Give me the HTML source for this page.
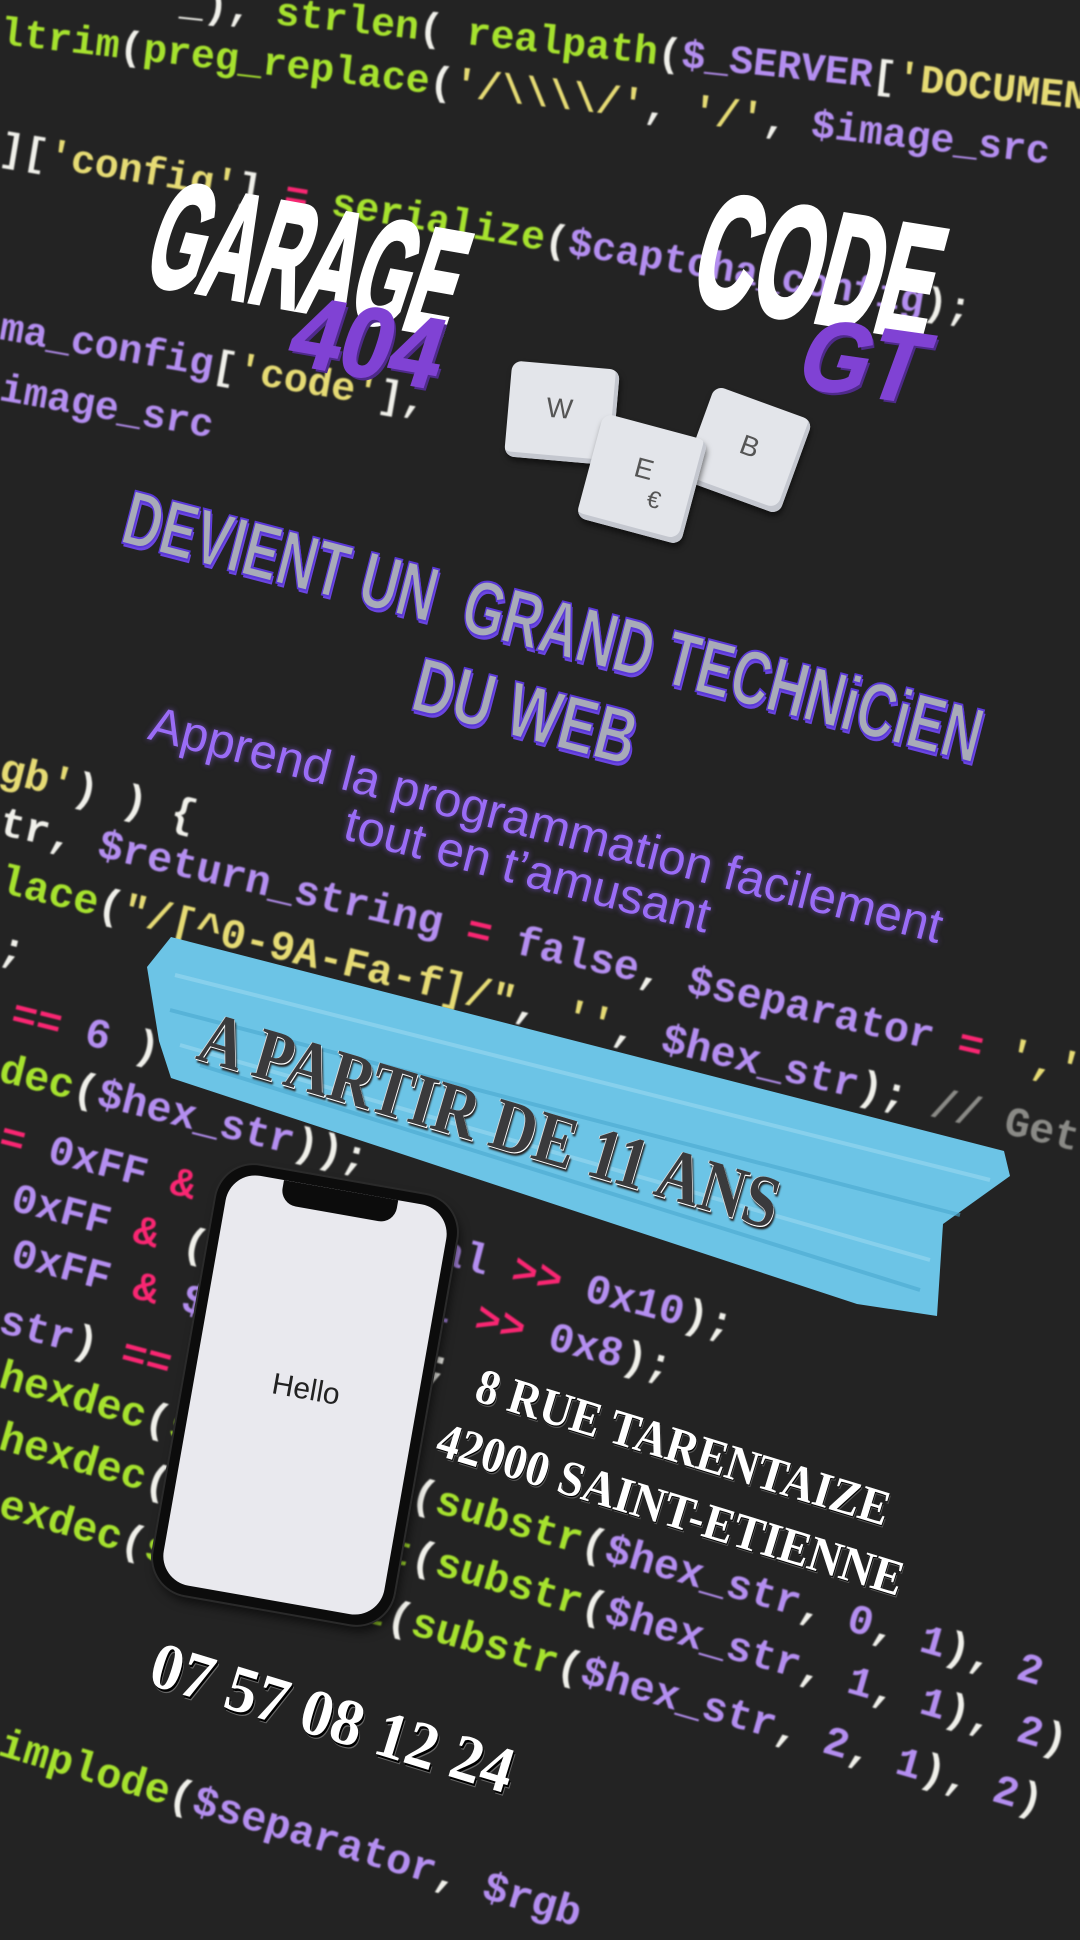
<!DOCTYPE html>
<html><head><meta charset="utf-8"><style>
*{margin:0;padding:0;box-sizing:border-box}
body{width:1080px;height:1920px;overflow:hidden;background:#232323;position:relative;font-family:"Liberation Sans",sans-serif}
.code{position:absolute;left:0;white-space:pre;font-family:"Liberation Mono",monospace;font-weight:bold;font-size:42px;line-height:50px;transform-origin:0 50%;color:#f0f0ea;filter:blur(0.7px)}
.g{color:#a6e22e}.p{color:#b48ef0}.y{color:#e6db74}.r{color:#f92672}.w{color:#f0f0ea}.c{color:#8a8a86}
.abs{position:absolute;transform-origin:0 0;white-space:pre}
.title{font-weight:bold;color:#fff;font-family:"Liberation Sans",sans-serif;-webkit-text-stroke:5px #fff}
.purple{font-weight:bold;color:#8042d4;text-shadow:4px 3px 0 #4e2a8a;-webkit-text-stroke:2px #8042d4}
.key{position:absolute;background:#e3e5ea;border-radius:10px;box-shadow:inset -4px -5px 0 #c4c7cf,2px 4px 6px rgba(0,0,0,.5);color:#555;font-size:28px;font-family:"Liberation Sans",sans-serif}
.dev{font-weight:bold;color:#a8abb8;-webkit-text-stroke:2px #5a38d8;text-shadow:3px 3px 0 #6b46e0}
.sub{color:#9a6cf6;font-size:49px;text-shadow:0 0 6px rgba(150,100,255,.6)}
.serif{font-family:"Liberation Serif",serif;font-weight:bold}
</style></head><body>

<div class="code" style="left:180px;top:-20px;transform:rotate(6deg);font-size:40px"><span class="w">_), </span><span class="g">strlen</span><span class="w">( </span><span class="g">realpath</span><span class="w">(</span><span class="p">$_SERVER</span><span class="w">[</span><span class="y">'DOCUMENT_ROOT'</span></div>
<div class="code" style="top:10px;transform:rotate(6.5deg);font-size:40px"><span class="g">ltrim</span><span class="w">(</span><span class="g">preg_replace</span><span class="w">(</span><span class="y">'/\\\\/'</span><span class="w">, </span><span class="y">'/'</span><span class="w">, </span><span class="p">$image_src</span></div>
<div class="code" style="top:125px;transform:rotate(9.5deg);font-size:40px"><span class="w">][</span><span class="y">'config'</span><span class="w">] </span><span class="r">=</span><span class="w"> </span><span class="g">serialize</span><span class="w">(</span><span class="p">$captcha_config</span><span class="w">);</span></div>
<div class="code" style="top:305px;transform:rotate(10deg);font-size:40px"><span class="p">ma_config</span><span class="w">[</span><span class="y">'code'</span><span class="w">],</span></div>
<div class="code" style="top:366px;transform:rotate(10deg);font-size:40px"><span class="p">image_src</span></div>

<div class="code" style="top:745px;transform:rotate(14deg)"><span class="y">gb'</span><span class="w">) ) {</span></div>
<div class="code" style="top:798px;transform:rotate(13deg)"><span class="w">tr, </span><span class="p">$return_string</span><span class="w"> </span><span class="r">=</span><span class="w"> </span><span class="p">false</span><span class="w">, </span><span class="p">$separator</span><span class="w"> </span><span class="r">=</span><span class="w"> </span><span class="y">','</span></div>
<div class="code" style="top:856px;transform:rotate(13.5deg)"><span class="g">lace</span><span class="w">(</span><span class="y">"/[^0-9A-Fa-f]/"</span><span class="w">, </span><span class="y">''</span><span class="w">, </span><span class="p">$hex_str</span><span class="w">); </span><span class="c">// Get</span></div>
<div class="code" style="top:923px;transform:rotate(14deg)"><span class="w">;</span></div>
<div class="code" style="left:12px;top:990px;transform:rotate(14deg)"><span class="r">==</span><span class="w"> </span><span class="p">6</span><span class="w"> ) {</span></div>
<div class="code" style="top:1045px;transform:rotate(14deg)"><span class="g">dec</span><span class="w">(</span><span class="p">$hex_str</span><span class="w">));</span></div>
<div class="code" style="top:1113px;transform:rotate(14.5deg)"><span class="r">=</span><span class="w"> </span><span class="p">0xFF</span><span class="w"> </span><span class="r">&amp;</span><span class="w"> (</span><span class="p">$color_val</span><span class="w"> </span><span class="r">&gt;&gt;</span><span class="w"> </span><span class="p">0x10</span><span class="w">);</span></div>
<div class="code" style="left:12px;top:1174px;transform:rotate(14.5deg)"><span class="p">0xFF</span><span class="w"> </span><span class="r">&amp;</span><span class="w"> (</span><span class="p">$color_val</span><span class="w"> </span><span class="r">&gt;&gt;</span><span class="w"> </span><span class="p">0x8</span><span class="w">);</span></div>
<div class="code" style="left:12px;top:1229px;transform:rotate(15deg)"><span class="p">0xFF</span><span class="w"> </span><span class="r">&amp;</span><span class="w"> </span><span class="p">$color_val</span><span class="w">;</span></div>
<div class="code" style="top:1296px;transform:rotate(15deg)"><span class="p">str</span><span class="w">) </span><span class="r">==</span><span class="w"> </span><span class="p">3</span><span class="w">) {</span></div>
<div class="code" style="top:1351px;transform:rotate(16deg)"><span class="g">hexdec</span><span class="w">(</span><span class="g">str_repeat</span><span class="w">(</span><span class="g">substr</span><span class="w">(</span><span class="p">$hex_str</span><span class="w">, </span><span class="p">0</span><span class="w">, </span><span class="p">1</span><span class="w">), </span><span class="p">2</span></div>
<div class="code" style="top:1413px;transform:rotate(16deg)"><span class="g">hexdec</span><span class="w">(</span><span class="g">str_repeat</span><span class="w">(</span><span class="g">substr</span><span class="w">(</span><span class="p">$hex_str</span><span class="w">, </span><span class="p">1</span><span class="w">, </span><span class="p">1</span><span class="w">), </span><span class="p">2</span><span class="w">)</span></div>
<div class="code" style="top:1480px;transform:rotate(16deg)"><span class="g">exdec</span><span class="w">(</span><span class="g">str_repeat</span><span class="w">(</span><span class="g">substr</span><span class="w">(</span><span class="p">$hex_str</span><span class="w">, </span><span class="p">2</span><span class="w">, </span><span class="p">1</span><span class="w">), </span><span class="p">2</span><span class="w">)</span></div>
<div class="code" style="top:1719px;transform:rotate(16.5deg)"><span class="g">implode</span><span class="w">(</span><span class="p">$separator</span><span class="w">, </span><span class="p">$rgb</span></div>

<!-- titles -->
<div class="abs title" style="left:180px;top:160px;font-size:150px;line-height:150px;transform:rotate(10deg) skewX(-8deg) scaleX(0.47)">GARAGE</div>
<div class="abs purple" style="left:310px;top:282px;font-size:100px;line-height:100px;transform:rotate(10deg) skewX(-8deg) scaleX(0.9)">404</div>
<div class="abs title" style="left:722px;top:170px;font-size:160px;line-height:160px;transform:rotate(9deg) skewX(-6deg) scaleX(0.52)">CODE</div>
<div class="abs purple" style="left:822px;top:305px;font-size:100px;line-height:100px;transform:rotate(8deg) skewX(-12deg) scaleX(0.88)">GT</div>

<!-- keys -->
<div class="key" style="left:508px;top:365px;width:108px;height:96px;transform:rotate(5deg)"><span style="position:absolute;left:38px;top:28px">W</span></div>
<div class="key" style="left:695px;top:400px;width:104px;height:100px;transform:rotate(20deg)"><span style="position:absolute;left:44px;top:30px">B</span></div>
<div class="key" style="left:588px;top:425px;width:108px;height:108px;transform:rotate(15deg)"><span style="position:absolute;left:44px;top:28px">E</span><span style="position:absolute;left:64px;top:58px;font-size:24px">€</span></div>

<!-- headline -->
<div class="abs dev" style="left:135px;top:478px;font-size:78px;line-height:78px;transform:rotate(14.5deg) scaleX(0.68)">DEVIENT UN  GRAND TECHNiCiEN</div>
<div class="abs dev" style="left:425px;top:645px;font-size:78px;line-height:78px;transform:rotate(14.5deg) scaleX(0.72)">DU WEB</div>
<div class="abs sub" style="left:157px;top:698px;line-height:52px;transform:rotate(14.5deg)">Apprend la programmation facilement</div>
<div class="abs sub" style="left:352px;top:798px;line-height:52px;transform:rotate(14.5deg)">tout en t’amusant</div>

<!-- brush -->
<svg class="abs" style="left:0;top:0" width="1080" height="1920">
<polygon points="147,967 171,937 1004,1151 1010,1176 943,1224 937,1316 857,1304 171,1078 159,1041" fill="#6cc4e6"/>
<g stroke-width="4" opacity=".6">
<line x1="175" y1="975" x2="990" y2="1180" stroke="#9ad8f0"/>
<line x1="170" y1="1010" x2="960" y2="1215" stroke="#4aa8d0"/>
<line x1="180" y1="1045" x2="930" y2="1260" stroke="#9ad8f0"/>
<line x1="200" y1="1065" x2="920" y2="1290" stroke="#4aa8d0"/>
</g>
</svg>
<div class="abs serif" style="left:212px;top:1000px;font-size:74px;line-height:74px;color:#3a3a3c;text-shadow:1px 1px 0 #fff,-1px 0 0 #ddd,3px 3px 2px #222;transform:rotate(16.5deg) scaleX(0.84)">A PARTIR DE 11 ANS</div>

<!-- phone -->
<div class="abs" style="left:305px;top:1395px;transform:translate(-122px,-218px) rotate(10deg);transform-origin:122px 218px;width:244px;height:436px;background:#0c0c0c;border-radius:38px;box-shadow:0 0 0 2px #2a2a2a,4px 6px 10px rgba(0,0,0,.6)">
<div style="position:absolute;left:10px;top:10px;right:10px;bottom:10px;background:#e9e9ee;border-radius:30px"></div>
<div style="position:absolute;left:64px;top:10px;width:116px;height:24px;background:#0c0c0c;border-radius:0 0 16px 16px"></div>
<div style="position:absolute;left:0;right:0;top:196px;text-align:center;font-size:30px;color:#222">Hello</div>
</div>

<!-- address -->
<div class="abs serif" style="left:485px;top:1360px;font-size:50px;line-height:50px;color:#fff;text-shadow:1px 1px 0 #000,2px 2px 0 #555;transform:rotate(17deg) scaleX(0.9)">8 RUE TARENTAIZE</div>
<div class="abs serif" style="left:446px;top:1414px;font-size:50px;line-height:50px;color:#fff;text-shadow:1px 1px 0 #000,2px 2px 0 #555;transform:rotate(17deg) scaleX(0.92)">42000 SAINT-ETIENNE</div>
<div class="abs serif" style="left:162px;top:1632px;font-size:66px;line-height:66px;color:#fff;text-shadow:2px 2px 0 #000,3px 3px 0 #666;transform:rotate(17deg) scaleX(0.95)">07 57 08 12 24</div>
</body></html>
